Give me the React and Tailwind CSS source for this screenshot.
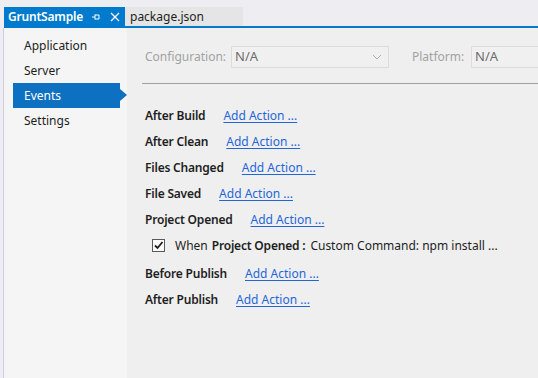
import React from 'react';

const font = { fontFamily: '"Noto Sans", "Open Sans", sans-serif' };

const navItems = ['Application', 'Server', 'Events', 'Settings'];

const events = [
  { name: 'After Build' },
  { name: 'After Clean' },
  { name: 'Files Changed' },
  { name: 'File Saved' },
  { name: 'Project Opened', action: 'Custom Command: npm install ...' },
  { name: 'Before Publish' },
  { name: 'After Publish' },
];

const Chevron = () => (
  <svg width="10" height="6" viewBox="0 0 10 6" className="text-[#b0b0b0]">
    <path d="M1 1 L5 5 L9 1" fill="none" stroke="currentColor" strokeWidth="1" />
  </svg>
);

const Select = ({ className }) => (
  <div className={`shrink-0 h-[22px] border border-[#dcdcdc] bg-[#f0f0f0] flex items-center justify-between pl-[3px] pr-[6px] text-[13px] text-[#6d6d6d] ${className}`}>
    <span>N/A</span>
    <Chevron />
  </div>
);

const App = () => {
  return (
    <div className="w-[538px] h-[378px] bg-[#eeeef2] pt-[7px] pl-[3px] flex flex-col overflow-hidden" style={font}>
      {/* Document tabs */}
      <div className="flex h-[19px] pl-[1px]">
        <div className="shrink-0 w-[121px] bg-[#007acc] text-white flex items-center pl-[4px] pr-[5px]">
          <span className="text-[12px] font-semibold tracking-[-0.2px]">GruntSample</span>
          <svg width="10" height="10" viewBox="0 0 10 10" className="ml-[8px]">
            <path d="M1 5 H4 M4 2.5 V7.5 M4 3 H8 V7 H4" fill="none" stroke="white" strokeWidth="1" />
          </svg>
          <svg width="10" height="10" viewBox="0 0 10 10" className="ml-auto">
            <path d="M1 1 L9 9 M9 1 L1 9" fill="none" stroke="white" strokeWidth="1.3" />
          </svg>
        </div>
        <div className="shrink-0 w-[118px] bg-[#e5e5e5] text-[#1e1e1e] flex items-center pl-[5px] text-[12px]">
          package.json
        </div>
      </div>
      <div className="h-[2px] bg-[#007acc] ml-[1px]"></div>

      <div className="flex flex-1 border-l border-[#cccedb]">
        {/* Left navigation */}
        <div className="shrink-0 w-[123px] bg-[#f5f5f5] pt-[5px] flex flex-col">
          {navItems.map((item) => (
            <div
              key={item}
              className={`relative ml-[9px] w-[107px] h-[25px] flex items-center pl-[11px] text-[12px] ${
                item === 'Events' ? 'bg-[#0e70c0] text-white' : 'text-[#1e1e1e]'
              }`}
            >
              {item}
              {item === 'Events' && (
                <div className="absolute right-[-7px] top-[6px] w-0 h-0 border-y-[6px] border-y-transparent border-l-[7px] border-l-[#0e70c0]"></div>
              )}
            </div>
          ))}
        </div>

        {/* Events page */}
        <div className="flex-1 min-w-0 overflow-hidden bg-[#efefef] pl-[15px] flex flex-col">
          <div className="flex items-center h-[22px] mt-[18px] pl-[3px] text-[12px]">
            <span className="shrink-0 w-[86px] text-[#a2a2a2]">Configuration:</span>
            <Select className="w-[158px]" />
            <span className="shrink-0 ml-[23px] w-[59px] text-[#a2a2a2]">Platform:</span>
            <Select className="w-[100px]" />
          </div>
          <div className="h-[1px] bg-[#a0a0a0] mt-[15px]"></div>

          <div className="flex flex-col mt-[19px] pl-[3px] text-[12px]">
            {events.map((ev) => (
              <React.Fragment key={ev.name}>
                <div className="h-[26px] flex items-center gap-[18px] whitespace-nowrap">
                  <span className="font-semibold text-[#1e1e1e] tracking-[-0.2px]">{ev.name}</span>
                  <span className="text-[#1f66d8] underline underline-offset-2">Add Action ...</span>
                </div>
                {ev.action && (
                  <div className="h-[28px] flex items-center pb-[3px] pl-[7px] text-[#1e1e1e] whitespace-nowrap">
                    <div className="shrink-0 w-[13px] h-[13px] border border-[#5a5a5a] bg-[#fafafa] flex items-center justify-center">
                      <svg width="11" height="11" viewBox="0 0 11 11">
                        <path d="M2 5.5 L4.5 8 L9.5 2" fill="none" stroke="#1e1e1e" strokeWidth="1.8" />
                      </svg>
                    </div>
                    <span className="ml-[10px]">When</span>
                    <span className="ml-[4px] font-semibold tracking-[-0.2px]">{ev.name} :</span>
                    <span className="ml-[5px]">{ev.action}</span>
                  </div>
                )}
              </React.Fragment>
            ))}
          </div>
        </div>
      </div>
    </div>
  );
};

export default App;
